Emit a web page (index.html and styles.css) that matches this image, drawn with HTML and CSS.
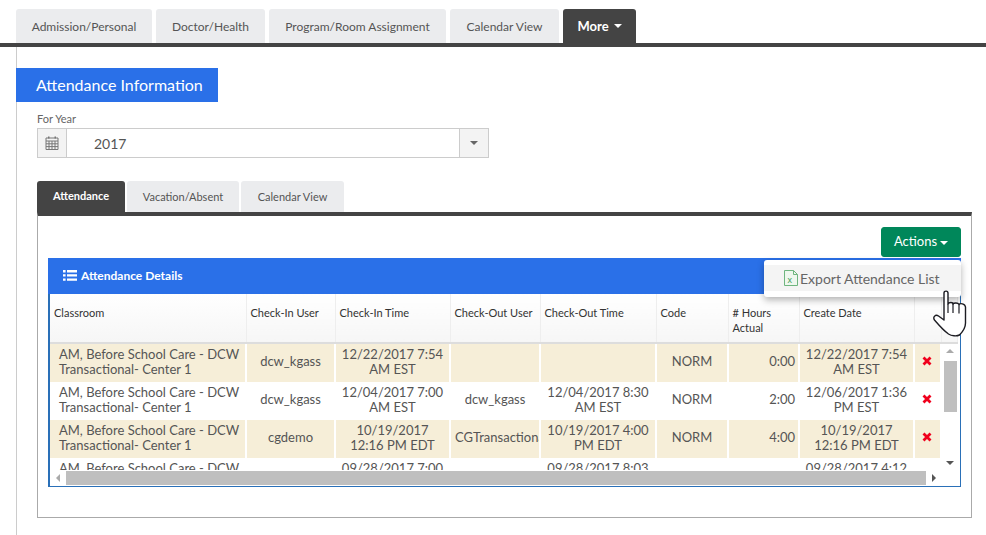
FILE: index.html
```html
<!DOCTYPE html>
<html lang="en">
<head>
<meta charset="utf-8">
<title>Attendance Information</title>
<link rel="stylesheet" href="styles.css">
</head>
<body>
<nav class="main-tabs">
  <a class="tab w1">Admission/Personal</a>
  <a class="tab w2">Doctor/Health</a>
  <a class="tab w3">Program/Room Assignment</a>
  <a class="tab w4">Calendar View</a>
  <a class="tab w5 active"><b>More</b><span class="caret"></span></a>
</nav>
<main class="content">
  <h1 class="title">Attendance Information</h1>
  <div class="form">
    <label class="label">For Year</label>
    <div class="select">
      <span class="addon">
        <svg width="14" height="14" viewBox="0 0 14 14"><path d="M3 0.500h1.500v2H3zM9.500 0.500H11v2H9.500z" fill="#777"/><path d="M1 2h12v11.500H1zM1 5h12M1 7.800h12M1 10.600h12M4 5v8.500M7 5v8.500M10 5v8.500" fill="none" stroke="#777" stroke-width="1"/></svg>
      </span>
      <span class="value">2017</span>
      <span class="addon right"><span class="caret grey"></span></span>
    </div>
  </div>
  <nav class="sub-tabs">
    <a class="subtab s1 active">Attendance</a>
    <a class="subtab s2">Vacation/Absent</a>
    <a class="subtab s3">Calendar View</a>
  </nav>
  <section class="box">
    <div class="actions"><button class="btn">Actions<span class="caret white"></span></button></div>
    <div class="panel">
      <div class="panel-head">
        <svg width="14" height="11" viewBox="0 0 14 11"><path d="M0 0h2.600v2.400H0zM4 0h10v2.400H4zM0 4.200h2.600v2.400H0zM4 4.200h10v2.400H4zM0 8.400h2.600v2.400H0zM4 8.400h10v2.400H4z" fill="#fff"/></svg>
        <span>Attendance Details</span>
      </div>
      <table class="grid head">
        <colgroup><col class="c1"><col class="c2"><col class="c3"><col class="c4"><col class="c5"><col class="c6"><col class="c7"><col class="c8"><col class="c9"><col class="c10"></colgroup>
        <tr><th>Classroom</th><th>Check-In User</th><th>Check-In Time</th><th>Check-Out User</th><th>Check-Out Time</th><th>Code</th><th># Hours<br>Actual</th><th>Create Date</th><th></th><th></th></tr>
      </table>
      <div class="scroller">
        <div class="viewport">
          <table class="grid body">
            <colgroup><col class="c1"><col class="c2"><col class="c3"><col class="c4"><col class="c5"><col class="c6"><col class="c7"><col class="c8"><col class="c9"></colgroup>
            <tr class="alt"><td class="l">AM, Before School Care - DCW Transactional- Center 1</td><td>dcw_kgass</td><td>12/22/2017 7:54 AM EST</td><td></td><td></td><td>NORM</td><td class="r">0:00</td><td>12/22/2017 7:54 AM EST</td><td class="del"><svg class="x" viewBox="0 0 10 10"><path d="M1.500 1.500l7 7M8.500 1.500l-7 7" stroke="#f0001c" stroke-width="2.800" fill="none"/></svg></td></tr>
            <tr><td class="l">AM, Before School Care - DCW Transactional- Center 1</td><td>dcw_kgass</td><td>12/04/2017 7:00 AM EST</td><td>dcw_kgass</td><td>12/04/2017 8:30 AM EST</td><td>NORM</td><td class="r">2:00</td><td>12/06/2017 1:36 PM EST</td><td class="del"><svg class="x" viewBox="0 0 10 10"><path d="M1.500 1.500l7 7M8.500 1.500l-7 7" stroke="#f0001c" stroke-width="2.800" fill="none"/></svg></td></tr>
            <tr class="alt"><td class="l">AM, Before School Care - DCW Transactional- Center 1</td><td>cgdemo</td><td>10/19/2017 12:16 PM EDT</td><td class="clip">CGTransactional</td><td>10/19/2017 4:00 PM EDT</td><td>NORM</td><td class="r">4:00</td><td>10/19/2017 12:16 PM EDT</td><td class="del"><svg class="x" viewBox="0 0 10 10"><path d="M1.500 1.500l7 7M8.500 1.500l-7 7" stroke="#f0001c" stroke-width="2.800" fill="none"/></svg></td></tr>
            <tr><td class="l">AM, Before School Care - DCW Transactional- Center 1</td><td></td><td>09/28/2017 7:00 AM EDT</td><td></td><td>09/28/2017 8:03 AM EDT</td><td></td><td class="r"></td><td>09/28/2017 4:12 PM EDT</td><td></td></tr>
          </table>
        </div>
        <div class="vbar">
          <span class="arrow up"></span>
          <span class="vtrack"><span class="vthumb"></span></span>
          <span class="arrow down"></span>
        </div>
        <div class="hbar">
          <span class="arrow left"></span>
          <span class="hthumb"></span>
          <span class="arrow rightw"></span>
        </div>
        <div class="corner"></div>
      </div>
      <div class="menu">
        <a class="menu-item">
          <svg width="14" height="16" viewBox="0 0 14 16"><path d="M0.500 0.500h9l4 4v11h-13z" fill="#eef7ee" stroke="#6fb57f"/><path d="M9.500 0.500v4h4" fill="none" stroke="#6fb57f"/><text x="3.500" y="13" font-family="Liberation Sans, sans-serif" font-size="9" fill="#3f9a58">x</text></svg>
          <span>Export Attendance List</span>
        </a>
      </div>
      <svg class="hand" width="36" height="48" viewBox="0 0 36 48">
        <path d="M11 29V3c0-2.500 4-2.500 4 0V14c1-2 5-2 5 0c1-1.500 5-1.500 6 .5c1-1.500 6-1 6.500 2.500V33c0 5-4 10-6 12c-3 1.500-8 1-11-1C10 40 5 34 1.500 30c-2-3 1-6 4-4l5.500 4z" fill="#fff" stroke="#1c1c22" stroke-width="1.400" stroke-linejoin="round"/>
        <path d="M15 14v9M20 14v9M26 14.500v9" stroke="#1c1c22" stroke-width="1.200" fill="none"/>
      </svg>
    </div>
  </section>
</main>
</body>
</html>
```
FILE: styles.css
```css
* { box-sizing: border-box; }
html, body { margin: 0; padding: 0; height: 100%; overflow: hidden; background: #fff; }
body { font-family: Lato, "Liberation Sans", sans-serif; color: #555; font-size: 14px; }

.main-tabs { display: flex; gap: 4px; margin: 0; padding: 9px 0 0 16px; height: 47px; border-bottom: 4px solid #444; }
.tab { display: flex; align-items: center; justify-content: center; height: 34px; background: #ebecee; border-radius: 3px 3px 0 0; font-size: 12px; color: #555; }
.tab.active { background: #444; color: #fff; height: 34px; }
.tab b { font-size: 13px; font-weight: 700; }
.w1 { width: 136px; } .w2 { width: 109px; } .w3 { width: 177px; } .w4 { width: 109px; } .w5 { width: 73px; }

.caret { display: inline-block; width: 0; height: 0; margin-left: 5px; border-left: 4px solid transparent; border-right: 4px solid transparent; border-top: 4px solid #fff; vertical-align: middle; }
.caret.grey { border-top-color: #666; margin: 0; }

.content { margin-left: 16px; border-left: 1px solid #ccc; height: 488px; padding-top: 21px; }
.title { margin: 0 0 0 -1px; width: 202px; height: 34px; background: #2a70e8; color: #fff; font-size: 16px; font-weight: 400; line-height: 34px; padding-left: 20px; }

.form { margin: 10px 0 0 20px; width: 452px; }
.label { display: block; font-size: 11px; line-height: 13px; height: 16px; color: #666; }
.select { display: flex; align-items: stretch; height: 30px; border: 1px solid #ccc; }
.addon { display: flex; align-items: center; justify-content: center; width: 29px; background: #f3f3f3; border-right: 1px solid #ccc; }
.addon.right { border-right: 0; border-left: 1px solid #ccc; }
.value { flex: 1; padding-left: 27px; line-height: 30px; font-size: 14px; color: #555; }

.sub-tabs { display: flex; gap: 2px; margin: 23px 0 0 20px; height: 31px; }
.subtab { display: flex; align-items: center; justify-content: center; height: 31px; background: #ebecee; border-radius: 3px 3px 0 0; font-size: 11px; color: #555; }
.subtab.active { background: #444; color: #fff; font-weight: 700; padding-bottom: 2px; }
.s1 { width: 88px; } .s2 { width: 112px; } .s3 { width: 103px; }

.box { margin-left: 20px; width: 935px; height: 306px; border: 1px solid #aaa; border-top: 4px solid #444; padding: 11px 10px 0; }
.actions { display: flex; justify-content: flex-end; height: 30px; margin-bottom: 1px; }
.btn { width: 80px; height: 30px; background: #00875a; color: #fff; border: 1px solid #00875a; border-radius: 3px; font: 400 13px Lato, sans-serif; padding: 0 0 2px; }
.btn .caret { margin-left: 3px; }

.panel { position: relative; width: 913px; height: 229px; border: 1px solid #2a70b8; border-left-width: 2px; border-top: 0; }
.panel-head { display: flex; align-items: center; gap: 4px; height: 36px; margin-left: -2px; margin-right: -1px; padding: 0 0 2px 15px; background: #2a70e8; color: #fff; font-size: 12px; font-weight: 700; }

.grid { border-collapse: collapse; table-layout: fixed; width: 907px; }
.c1 { width: 196px; } .c2 { width: 89px; } .c3 { width: 115px; } .c4 { width: 90px; } .c5 { width: 116px; } .c6 { width: 72px; } .c7 { width: 71px; } .c8 { width: 115px; } .c9 { width: 27px; } .c10 { width: 16px; }

.head { height: 50px; border-bottom: 2px solid #ddd; }
.head th { height: 48px; padding: 11px 4px 0; vertical-align: top; text-align: left; font-size: 11px; font-weight: 400; line-height: 15px; color: #333; background: linear-gradient(#fff, #f6f6f6); border-right: 1px solid #eee; }

.scroller { display: grid; grid-template-columns: 892px 16px; grid-template-rows: 126px 15px; }
.viewport { overflow: hidden; background: #fff; }
.body { width: 891px; }
.body td { height: 38px; padding: 0 4px 3px; text-align: center; font-size: 13px; line-height: 15px; color: #555; border-right: 2px solid #fff; vertical-align: middle; }
.body tr.alt td { background: #f6eed8; }
.body td.l { text-align: left; padding-left: 9px; padding-right: 2px; }
.body td.r { text-align: right; padding-right: 3px; }
.body td.clip { white-space: nowrap; overflow: hidden; text-align: left; padding-left: 4px; padding-right: 0; }
.body td.del { padding: 0 1px 6px 0; }
.x { width: 10px; height: 10px; display: inline-block; vertical-align: middle; }

.vbar { display: flex; flex-direction: column; align-items: center; background: #fff; width: 16px; }
.vtrack { flex: 1; width: 13px; }
.vthumb { display: block; width: 13px; height: 51px; margin-top: 3px; background: #bfbfbf; }
.hbar { display: flex; align-items: center; background: #fff; }
.hthumb { flex: 1; height: 14px; background: #bfbfbf; }
.corner { background: #fff; }

.arrow { display: block; width: 0; height: 0; flex: none; }
.up { margin: 5px 0; border-left: 4px solid transparent; border-right: 4px solid transparent; border-bottom: 4px solid #aaa; }
.down { margin: 5px 0; border-left: 4px solid transparent; border-right: 4px solid transparent; border-top: 4px solid #555; }
.left { margin: 0 6px; border-top: 4px solid transparent; border-bottom: 4px solid transparent; border-right: 4px solid #aaa; }
.rightw { margin: 0 6px; border-top: 4px solid transparent; border-bottom: 4px solid transparent; border-left: 4px solid #555; }

.menu { position: absolute; top: 2px; right: -1px; width: 197px; height: 37px; padding: 5px 0; background: #fff; border-radius: 3px; box-shadow: 0 3px 7px rgba(0,0,0,.3); }
.menu-item { display: flex; align-items: center; gap: 2px; height: 26px; padding-left: 20px; background: #f4f4f4; font-size: 14px; color: #666; }
.hand { position: absolute; left: 883px; top: 32px; }
```
